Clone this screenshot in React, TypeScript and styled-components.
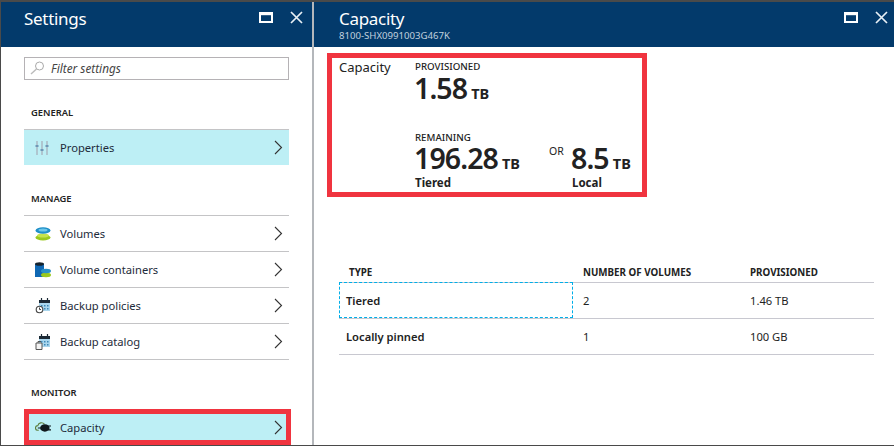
import React from "react";
import styled, { createGlobalStyle } from "styled-components";

const Global = createGlobalStyle`
  html, body { margin: 0; padding: 0; background: #fff; }
  body { font-family: "Noto Sans", "Open Sans", "Liberation Sans", sans-serif; color: #1f1f1f; }
  * { box-sizing: border-box; }
`;

const Frame = styled.div`
  width: 894px; height: 446px; display: flex; overflow: hidden;
  border-top: 2px solid #4a4a4a; border-left: 1px solid #4a4a4a; border-bottom: 1px solid #4a4a4a;
  position: relative;
`;
const Blade = styled.section<{ $w?: number }>`
  display: flex; flex-direction: column; height: 100%;
  ${p => (p.$w ? `width:${p.$w}px; flex:none; border-right:2px solid #b4b7bb;` : "flex:1; min-width:0;")}
`;
const Header = styled.header<{ $left: number; $right: number }>`
  height: 45px; flex: none; background: #033a6b; color: #fff;
  display: flex; align-items: flex-start; justify-content: space-between;
  padding: 0 ${p => p.$right}px 0 ${p => p.$left}px; position: relative;
`;
const ActiveMark = styled.span`
  position: absolute; left: 37px; top: -2px; width: 79px; height: 2px; background: #e8952c;
`;
const TitleBlock = styled.div`display: flex; flex-direction: column;`;
const Title = styled.h1`
  margin: 6px 0 0; font-size: 17px; line-height: 22px; font-weight: 400; letter-spacing: -0.3px;
`;
const Subtitle = styled.div`
  font-size: 9.6px; line-height: 12px; color: #c0d0de;
`;
const Controls = styled.div`display: flex; align-items: center; gap: 17px; margin-top: 9px;`;
const IconBtn = styled.svg`display: block; flex: none;`;

const SideBody = styled.div`flex: 1; padding: 10px 23px 0 23px; display: flex; flex-direction: column;`;
const Search = styled.div`
  height: 23px; width: 265px; border: 1px solid #b5b2b5; display: flex; align-items: center; gap: 6px; padding: 0 0 2px 5px;
  font-style: italic; font-size: 11.8px; color: #444; flex: none;
`;
const SectionLabel = styled.div<{ $mt: number }>`
  margin-top: ${p => p.$mt}px; padding-left: 7px; height: 16px; line-height: 16px;
  font-size: 9.4px; font-weight: 600; color: #222;
`;
const List = styled.div`margin-top: 8px; width: 265px; flex: none;`;
const Row = styled.div<{ $selected?: boolean }>`
  height: 36px; display: flex; align-items: center; padding: 0 6px 0 7px;
  border-top: 1px solid #c4c4c6;
  font-size: 11.2px; color: #1e2b3a;
  ${p => (p.$selected ? "background:#bdeff5;" : "")}
`;
const LastLine = styled.div`height: 1px; background: #c4c4c6;`;
const RowIcon = styled.span`width: 29px; padding-left: 4px; flex: none; display: flex; align-items: center;`;
const RowLabel = styled.span`flex: 1;`;
const Highlight = styled.div`
  width: 267px; height: 36px; margin-top: 8px; border: 5px solid #f0343f;
  background: #bdeff5; display: flex; align-items: center; padding: 0 3px 0 2px;
  font-size: 11.2px; color: #1e2b3a; flex: none;
`;

const Main = styled.div`flex: 1; padding: 6px 19px 0 13px; display: flex; flex-direction: column;`;
const CapacityBox = styled.div`
  width: 320px; height: 144px; border: 5px solid #f0343f; padding: 1px 0 0 7px;
  display: grid; grid-template-columns: 76px 1fr; flex: none;
`;
const CapLabel = styled.div`font-size: 13px; line-height: 17px; color: #222;`;
const Stats = styled.div`display: flex; flex-direction: column; padding-top: 2px;`;
const StatLabel = styled.div`font-size: 9.7px; font-weight: 500; line-height: 12px; color: #222;`;
const Big = styled.div<{ $top: number }>`
  margin-top: ${p => p.$top}px; margin-left: -1px; font-size: 28.5px; font-weight: 600; line-height: 26px; height: 26px; color: #222;
  letter-spacing: -0.9px; white-space: nowrap;
`;
const Unit = styled.span`font-size: 14.5px; line-height: 0; font-weight: 700; margin-left: 4px; letter-spacing: 0;`;
const Note = styled.div`margin-top: 5px; font-size: 11.5px; font-weight: 700; line-height: 13px; color: #222;`;
const RemainingRow = styled.div`display: flex;`;
const Remaining = styled.div`width: 134px;`;
const Or = styled.div`width: 23px; font-size: 10.5px; line-height: 12px; color: #222; padding-top: 1px;`;
const StatBlock = styled.div<{ $mt?: number }>`margin-top: ${p => p.$mt ?? 0}px;`;

const Table = styled.div`margin: 65px 0 0 12px; width: 535px; display: flex; flex-direction: column;`;
const TRow = styled.div<{ $head?: boolean }>`
  display: grid; grid-template-columns: 234px 167px 1fr; align-items: center;
  height: ${p => (p.$head ? "20px" : "36px")};
  ${p => (p.$head ? "font-size:9.8px;font-weight:700;color:#222;" : "border-top:1px solid #c8c8d0;font-size:11.2px;color:#222;")}
`;
const TCell = styled.div<{ $strong?: boolean; $focus?: boolean }>`
  padding-left: 10px;
  ${p => (p.$strong ? "font-weight:600;padding-left:7px;" : "")}
  ${p => (p.$focus ? "outline:1px dashed #00aee8;outline-offset:-1px;margin-top:-1px;height:calc(100% + 1px);display:flex;align-items:center;" : "")}
`;
const TEnd = styled.div`height: 1px; background: #c8c8d0;`;

const MaxIcon = () => (
  <IconBtn width="14" height="11" viewBox="0 0 14 11"><path d="M0 0h14v11H0z" fill="#fff" /><path d="M2 3.2h10V9H2z" fill="#033a6b" /></IconBtn>
);
const CloseIcon = () => (
  <IconBtn width="13" height="13" viewBox="0 0 13 13"><path d="M1 1l11 11M12 1L1 12" stroke="#e8f0f6" strokeWidth="1.7" fill="none" /></IconBtn>
);
const Chevron = () => (
  <svg width="9" height="15" viewBox="0 0 9 15"><path d="M1 1l6.5 6.5L1 14" stroke="#333" strokeWidth="1.1" fill="none" /></svg>
);
const SearchIcon = () => (
  <svg width="15" height="14" viewBox="0 0 15 14"><circle cx="9.500" cy="5" r="4" stroke="#aaa" fill="none" /><path d="M6.500 8L1 13" stroke="#bbb" strokeWidth="1.400" /></svg>
);
const PropsIcon = () => (
  <svg width="15" height="16" viewBox="0 0 15 16">
    <path d="M2 1v14M7 1v14M12 1v14" stroke="#a9b6c0" strokeWidth="1.400" />
    <path d="M.5 5h3v2h-3zM5.500 9h3v2h-3zM10.500 5h3v2h-3z" fill="#6f97b6" />
  </svg>
);
const VolumesIcon = () => (
  <svg width="16" height="14" viewBox="0 0 16 14">
    <ellipse cx="8" cy="10.500" rx="7.500" ry="3" fill="#9bc91e" />
    <ellipse cx="8" cy="8.500" rx="6" ry="2" fill="#c6e34c" />
    <ellipse cx="8" cy="3.500" rx="7.500" ry="3.200" fill="#1f8fc8" />
    <ellipse cx="8" cy="3" rx="4.500" ry="1.500" fill="#6cc6ea" />
  </svg>
);
const ContainersIcon = () => (
  <svg width="16" height="16" viewBox="0 0 16 16">
    <path d="M0 2h9v13H0z" fill="#0f68b4" /><ellipse cx="4.500" cy="2" rx="4.500" ry="1.800" fill="#16232e" />
    <ellipse cx="11" cy="13" rx="5" ry="2.200" fill="#9bc91e" />
    <ellipse cx="11" cy="9" rx="5" ry="2.200" fill="#2a93c8" />
  </svg>
);
const CalBase = () => (
  <>
    <path d="M4 2h11v11H4z" fill="#a9d6ee" /><path d="M4 2h11v3H4z" fill="#1c2a36" />
    <path d="M6.500 0v3M12.500 0v3" stroke="#1c2a36" strokeWidth="1.200" />
    <path d="M6 7h1.500v1.500H6zM9 7h1.500v1.500H9zM12 7h1.500v1.500H12zM9 10h1.500v1.500H9zM12 10h1.500v1.500H12z" fill="#3d87b5" />
  </>
);
const PolicyIcon = () => (
  <svg width="16" height="16" viewBox="0 0 16 16"><CalBase /><circle cx="4.500" cy="11.500" r="3.300" fill="#fff" stroke="#444" strokeWidth="1.100" /><path d="M4.500 9.500v2h1.500" stroke="#444" fill="none" /></svg>
);
const CatalogIcon = () => (
  <svg width="16" height="16" viewBox="0 0 16 16"><CalBase /><path d="M1 9h6v6.500H1z" fill="#f3f3f3" stroke="#555" /><path d="M3 9V7.500h3" stroke="#555" fill="none" /></svg>
);
const CapacityIcon = () => (
  <svg width="16" height="12" viewBox="0 0 17 12">
    <path d="M4 9.500H3a2.500 2.500 0 010-5 4 4 0 017-1.500" stroke="#5e7f3c" strokeWidth="1.200" fill="none" />
    <ellipse cx="10.500" cy="7" rx="5" ry="4" fill="#10181c" />
    <path d="M3 7h4M14 5h3M14 9h3" stroke="#10181c" strokeWidth="1.200" />
  </svg>
);

const items = [
  { label: "Volumes", icon: <VolumesIcon /> },
  { label: "Volume containers", icon: <ContainersIcon /> },
  { label: "Backup policies", icon: <PolicyIcon /> },
  { label: "Backup catalog", icon: <CatalogIcon /> },
];

export default function App() {
  return (
    <>
      <Global />
      <Frame>
        <Blade $w={313}>
          <Header $left={23} $right={9}>
            <Title>Settings</Title>
            <Controls><MaxIcon /><CloseIcon /></Controls>
          </Header>
          <SideBody>
            <Search><SearchIcon />Filter settings</Search>
            <SectionLabel $mt={25}>GENERAL</SectionLabel>
            <List>
              <Row $selected>
                <RowIcon><PropsIcon /></RowIcon><RowLabel>Properties</RowLabel><Chevron />
              </Row>
            </List>
            <SectionLabel $mt={26}>MANAGE</SectionLabel>
            <List>
              {items.map(i => (
                <Row key={i.label}><RowIcon>{i.icon}</RowIcon><RowLabel>{i.label}</RowLabel><Chevron /></Row>
              ))}
              <LastLine />
            </List>
            <SectionLabel $mt={25}>MONITOR</SectionLabel>
            <Highlight>
              <RowIcon><CapacityIcon /></RowIcon><RowLabel>Capacity</RowLabel><Chevron />
            </Highlight>
          </SideBody>
        </Blade>
        <Blade>
          <Header $left={25} $right={6}>
            <ActiveMark />
            <TitleBlock>
              <Title>Capacity</Title>
              <Subtitle>8100-SHX0991003G467K</Subtitle>
            </TitleBlock>
            <Controls><MaxIcon /><CloseIcon /></Controls>
          </Header>
          <Main>
            <CapacityBox>
              <CapLabel>Capacity</CapLabel>
              <Stats>
                <StatBlock>
                  <StatLabel>PROVISIONED</StatLabel>
                  <Big $top={2}>1.58<Unit>TB</Unit></Big>
                </StatBlock>
                <StatBlock $mt={31}>
                  <StatLabel>REMAINING</StatLabel>
                  <RemainingRow>
                    <Remaining><Big $top={1}>196.28<Unit>TB</Unit></Big><Note>Tiered</Note></Remaining>
                    <Or>OR</Or>
                    <div><Big $top={1}>8.5<Unit>TB</Unit></Big><Note>Local</Note></div>
                  </RemainingRow>
                </StatBlock>
              </Stats>
            </CapacityBox>
            <Table>
              <TRow $head><TCell>TYPE</TCell><TCell>NUMBER OF VOLUMES</TCell><TCell>PROVISIONED</TCell></TRow>
              <TRow><TCell $strong $focus>Tiered</TCell><TCell>2</TCell><TCell>1.46 TB</TCell></TRow>
              <TRow><TCell $strong>Locally pinned</TCell><TCell>1</TCell><TCell>100 GB</TCell></TRow>
              <TEnd />
            </Table>
          </Main>
        </Blade>
      </Frame>
    </>
  );
}
